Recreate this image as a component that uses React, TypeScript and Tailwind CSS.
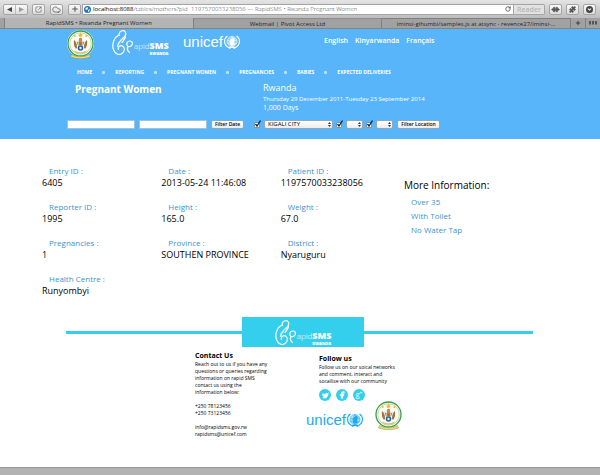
import type { ReactNode } from "react";
import {
  ChevronDown,
  Cloud,
  Facebook,
  Plus,
  Puzzle,
  RotateCw,
  SquareArrowOutUpRight,
  Twitter,
} from "lucide-react";

const navItems = [
  "Home",
  "Reporting",
  "Pregnant Women",
  "Pregnancies",
  "Babies",
  "Expected Deliveries",
];

const fields = [
  ["Entry ID", "6405"],
  ["Date", "2013-05-24 11:46:08"],
  ["Patient ID", "1197570033238056"],
  ["Reporter ID", "1995"],
  ["Height", "165.0"],
  ["Weight", "67.0"],
  ["Pregnancies", "1"],
  ["Province", "SOUTHEN PROVINCE"],
  ["District", "Nyaruguru"],
  ["Health Centre", "Runyombyi"],
];

function ToolButton({ label, children }: { label: string; children: ReactNode }) {
  return (
    <button
      aria-label={label}
      className="flex h-[11px] w-[13px] shrink-0 items-center justify-center rounded-[2px] border border-[#a5a5a5] bg-linear-to-b from-[#fafafa] to-[#dcdcdc] text-[#555]"
    >
      {children}
    </button>
  );
}

function Emblem() {
  return (
    <svg viewBox="0 0 54 60" className="h-[30px] w-[27px] shrink-0" aria-label="Republic of Rwanda">
      <circle cx="27" cy="29" r="27" fill="#fff" />
      <circle cx="27" cy="29" r="25" fill="#fffef6" stroke="#3d9a4c" strokeWidth="2.6" />
      <circle cx="27" cy="29" r="21.5" fill="none" stroke="#7fae5c" strokeWidth="1" />
      <g fill="#f1b932">
        <path d="M27 7l1.3 3 3-.8-1.7 2.7 2.4 2-3.2.4-.3 3.2-2-2.5-2.9 1.5.8-3.2-3-1.3 3.2-1z" />
        <circle cx="15.5" cy="14" r="2" />
        <circle cx="38.5" cy="14" r="2" />
      </g>
      <path d="M24 19q3-3 6 0l1 9h-8z" fill="#b98f5c" />
      <path d="M14 22q6 4 6 15l-2 3q-6-8-4-18z" fill="#a5713f" />
      <path d="M40 22q-6 4-6 15l2 3q6-8 4-18z" fill="#a5713f" />
      <path d="M20 25l3 8M34 25l-3 8" stroke="#3d9a4c" strokeWidth="1.8" />
      <path d="M23 27h8l-2 6h-4z" fill="#d0553f" />
      <circle cx="27" cy="38" r="5.6" fill="#2462a8" />
      <circle cx="27" cy="38" r="2.4" fill="#eef3f8" />
      <path d="M14 43q13 7 26 0l-2 4q-11 5-22 0z" fill="#d9c37a" />
      <path d="M9 51q18 9 36 0l2 5q-20 7-40 0z" fill="#f2d978" stroke="#6d9a45" strokeWidth="1" />
    </svg>
  );
}

function RapidSmsLogo() {
  return (
    <div className="flex items-start text-white" aria-label="RapidSMS Rwanda">
      <svg
        viewBox="0 0 44 54"
        className="h-[27px] w-[22px] shrink-0"
        fill="none"
        stroke="currentColor"
        strokeWidth="2.4"
        strokeLinecap="round"
        aria-hidden="true"
      >
        <path d="M15 13C12 4 24 0 27 7c3 7-4 10-8 14-4 4-7 8-8 14" />
        <path d="M14 12C5 16-1 29 3 41c3 10 12 12 17 8 6-4 6-11 2-14-5-4-11 1-9 6" />
        <path d="M20 27c4-6 8-9 7-15" />
        <path d="M32 35c-5-5-2-11 4-11s7 9 0 11l-5 1M31 37c-1 4 1 8 4 10" />
      </svg>
      <span className="mt-[11px] text-[8px] leading-[12px] font-light">apid</span>
      <span className="mt-[11px] flex flex-col">
        <strong className="text-[9px] leading-[12px] font-extrabold">SMS</strong>
        <strong className="-mt-px text-[4px] leading-[5px] font-extrabold">RWANDA</strong>
      </span>
    </div>
  );
}

function UnicefLogo() {
  return (
    <div className="flex items-center gap-px" aria-label="unicef">
      <span className="font-['Liberation_Sans',sans-serif] text-[15px] leading-[18px]">unicef</span>
      <svg
        viewBox="0 0 32 28"
        className="h-[14px] w-4"
        fill="none"
        stroke="currentColor"
        strokeWidth="1.2"
        aria-hidden="true"
      >
        <circle cx="16" cy="13" r="10" fill="currentColor" fillOpacity="0.35" />
        <path d="M7 11q9 4 18 0M7 17q9-4 18 0M16 3.5q-7 9 0 19q7-10 0-19" />
        <path d="M17 7c5-2 6 4 2 6l2 7h-9l2-5c-4-2-1-7 5-8z" fill="currentColor" />
        <path
          d="M7 2C-1 7-1 20 9 25M25 2c8 5 8 18-2 23M9 25q7-2 13 2M23 25q-7-2-13 2"
          strokeWidth="2.4"
        />
      </svg>
    </div>
  );
}

function TinySelect({ label, value, width }: { label: string; value: string; width: string }) {
  return (
    <div className={`relative ${width}`}>
      <select
        aria-label={label}
        defaultValue={value}
        className="block h-[9px] w-full appearance-none rounded-[2px] border border-[#8fa9bc] bg-linear-to-b from-white to-[#ececec] pl-[3px] text-[6px] leading-[7px] text-black"
      >
        <option>{value}</option>
      </select>
      <svg
        viewBox="0 0 6 10"
        className="pointer-events-none absolute top-[2px] right-[2px] h-[5px] w-[3px]"
        aria-hidden="true"
      >
        <path d="M3 0l3 4H0zM3 10l3-4H0z" fill="#333" />
      </svg>
    </div>
  );
}

function TinyCheck({ label }: { label: string }) {
  return (
    <span className="relative h-[9px] w-[7px] shrink-0">
      <input
        type="checkbox"
        defaultChecked
        aria-label={label}
        className="mt-[2px] block h-[6px] w-[6px] appearance-none rounded-[1px] border border-[#7a93a8] bg-white"
      />
      <svg
        viewBox="0 0 14 14"
        className="pointer-events-none absolute top-0 left-0 h-[7px] w-[7px]"
        aria-hidden="true"
      >
        <path d="M3 8l3 4 7-11" fill="none" stroke="#16263a" strokeWidth="2.6" />
      </svg>
    </span>
  );
}

const filterButton =
  "h-[9px] shrink-0 rounded-[2px] border border-[#8fa9bc] bg-linear-to-b from-white to-[#ececec] text-center text-[5px] leading-[7px] font-semibold whitespace-nowrap text-black";

function BrowserChrome() {
  return (
    <div className="font-['Open_Sans',sans-serif]">
      <div className="flex h-[18px] items-center bg-linear-to-b from-[#e4e4e4] to-[#bdbdbd] pr-1 pl-[3px]">
        <div className="mr-1 flex h-[11px] w-[25px] shrink-0 rounded-[2px] border border-[#a5a5a5] bg-linear-to-b from-[#fafafa] to-[#dcdcdc]">
          <button aria-label="Back" className="flex flex-1 items-center justify-center border-r border-[#bbb]">
            <svg viewBox="0 0 6 6" className="h-[5px] w-[5px]"><path d="M6 0v6L0 3z" fill="#444" /></svg>
          </button>
          <button aria-label="Forward" className="flex flex-1 items-center justify-center">
            <svg viewBox="0 0 6 6" className="h-[5px] w-[5px]"><path d="M0 0v6l6-3z" fill="#999" /></svg>
          </button>
        </div>
        <div className="mr-px flex gap-[5px]">
          <ToolButton label="Share"><SquareArrowOutUpRight size={7} /></ToolButton>
          <ToolButton label="iCloud tabs"><Cloud size={9} /></ToolButton>
          <ToolButton label="Add bookmark"><Plus size={8} strokeWidth={3} /></ToolButton>
        </div>
        <div className="flex h-[11px] min-w-0 flex-1 items-center border border-[#a5a5a5] bg-white pl-px text-[6px] leading-[9px] whitespace-nowrap text-[#444]">
          <svg viewBox="0 0 14 14" className="mr-[2px] h-[7px] w-[7px] shrink-0" aria-hidden="true">
            <circle cx="7" cy="7" r="7" fill="#2874c4" />
            <path d="M3 4l4-2 1 3-2 3-3-1zM8 8l4-2-2 5-2 1z" fill="#e6f2fb" />
          </svg>
          <span className="text-black">localhost:8088</span>
          <span className="truncate font-light">/tables/mothers?pid=1197570033238056 — RapidSMS • Rwanda Pregnant Women</span>
          <button aria-label="Reload" className="mr-[2px] ml-auto text-[#444]"><RotateCw size={6} strokeWidth={3} /></button>
        </div>
        <button className="mr-1 h-[11px] w-[31px] shrink-0 rounded-r-[2px] border border-l-0 border-[#a5a5a5] bg-[#e2e2e2] text-[7px] leading-[9px] font-semibold text-[#b5b5b5]">
          Reader
        </button>
        <div className="flex gap-1">
          <ToolButton label="Extension"><Puzzle size={7} fill="currentColor" className="rotate-45" /></ToolButton>
          <ToolButton label="Plugin"><Puzzle size={7} fill="currentColor" /></ToolButton>
          <ToolButton label="Downloads">
            <span className="flex h-[7px] w-[7px] items-center justify-center rounded-full bg-[#444] text-white">
              <ChevronDown size={5} strokeWidth={5} />
            </span>
          </ToolButton>
        </div>
      </div>
      <div className="flex h-[11px] border-b border-[#848484] bg-[#a1a1a1] pl-1 text-[6px] leading-[10px] font-medium text-[#252525]">
        <button className="min-w-0 flex-1 truncate border-x border-[#808080] bg-[#b4b4b4]">RapidSMS • Rwanda Pregnant Women</button>
        <button className="min-w-0 flex-1 truncate border-t border-[#8d8d8d]">Webmail | Pivot Access Ltd</button>
        <button className="min-w-0 flex-1 truncate border-t border-l border-[#808080]">
          iminsi-gihumbi/samples.js at atsync - revence27/iminsi-…
        </button>
        <button aria-label="New tab" className="flex w-[15px] items-center justify-center border-l border-[#808080]"><Plus size={6} strokeWidth={3} /></button>
        <button aria-label="Show all tabs" className="flex w-[15px] items-center justify-center border-l border-[#808080]">
          <svg viewBox="0 0 16 8" className="h-1 w-2"><path d="M0 0h4v7H0zM6 0h4v7H6zM12 0h4v7h-4z" fill="#555" /></svg>
        </button>
      </div>
    </div>
  );
}

export default function App() {
  return (
    <div className="flex min-h-screen flex-col bg-white font-['Open_Sans',sans-serif] text-black">
      <BrowserChrome />

      <header className="bg-[#58b5f9] pb-[10px] pl-[67px] text-white">
        <div className="flex h-8 items-start">
          <Emblem />
          <div className="ml-[18px] w-[71px]"><RapidSmsLogo /></div>
          <div className="mt-1 w-[141px]"><UnicefLogo /></div>
          <div className="mt-[6px] flex gap-[7px] text-[7px] leading-[12px] font-semibold">
            <a href="#en">English</a>
            <a href="#rw">Kinyarwanda</a>
            <a href="#fr">Français</a>
          </div>
        </div>
        <nav className="mt-[7px] flex items-center pl-[10px] text-[5px] leading-[8px] font-bold uppercase">
          {navItems.map((item, i) => (
            <span key={item} className="flex items-center whitespace-nowrap">
              {i > 0 && <span className="mx-[10px] h-[3px] w-[3px] rounded-[1px] bg-[#b9e0fd]" />}
              <a href="#nav">{item}</a>
            </span>
          ))}
        </nav>
        <div className="mt-[5px] flex pl-2">
          <h1 className="w-[188px] text-[10px] leading-[16px] font-bold">Pregnant Women</h1>
          <div>
            <p className="text-[9px] leading-[14px]">Rwanda</p>
            <p className="text-[6px] leading-[8px]">Thursday 29 December 2011-Tuesday 23 September 2014</p>
            <p className="text-[7px] leading-[10px]">1,000 Days</p>
          </div>
        </div>
        <form className="mt-[7px] flex items-center" onSubmit={(e) => e.preventDefault()}>
          <input aria-label="Start date" className="mr-1 h-[9px] w-[68px] border border-[#9cc4e0] bg-white text-[6px] text-black" />
          <input aria-label="End date" className="mr-1 h-[9px] w-[68px] border border-[#9cc4e0] bg-white text-[6px] text-black" />
          <button className={`${filterButton} w-[33px]`}>Filter Date</button>
          <div className="ml-[10px] flex items-center gap-[3px]">
            <TinyCheck label="Filter by province" />
            <TinySelect label="Province" value="KIGALI CITY" width="w-[69px]" />
            <TinyCheck label="Filter by district" />
            <TinySelect label="District" value="" width="w-[17px]" />
            <TinyCheck label="Filter by health centre" />
            <TinySelect label="Health centre" value="" width="w-[17px]" />
            <button className={`${filterButton} ml-[1px] w-[43px]`}>Filter Location</button>
          </div>
        </form>
      </header>

      <main className="flex flex-1 flex-col">
        <div className="flex pt-[26px] pl-[42px]">
          <dl className="grid w-[358px] grid-cols-3 gap-y-3">
            {fields.map(([label, value]) => (
              <div key={label}>
                <dt className="pl-[7px] text-[8px] leading-[12px] text-[#3c93cb]">{label} :</dt>
                <dd className="text-[9px] leading-[12px] whitespace-nowrap">{value}</dd>
              </div>
            ))}
          </dl>
          <section className="pt-[13px] pl-1">
            <h2 className="text-[10px] leading-[14px]">More Information:</h2>
            <ul className="mt-[3px] pl-[7px] text-[8px] leading-[14px] text-[#3c93cb]">
              <li>Over 35</li>
              <li>With Toilet</li>
              <li>No Water Tap</li>
            </ul>
          </section>
        </div>

        <footer className="pt-5 pl-[66px]">
          <div className="mr-[67px] flex items-center">
            <div className="h-[3px] w-44 bg-[#35cfee]" />
            <div className="flex h-[30px] w-[122px] items-start justify-center bg-[#35cfee] pt-[2px]">
              <RapidSmsLogo />
            </div>
            <div className="h-[3px] flex-1 bg-[#35cfee]" />
          </div>
          <div className="flex pt-1 pl-[129px] text-[5px] leading-[7px]">
            <section className="w-[124px]">
              <h3 className="text-[7px] leading-[10px] font-bold">Contact Us</h3>
              <p>
                Reach out to us if you have any<br />
                questions or queries regarding<br />
                information on rapid SMS<br />
                contact us using the<br />
                information below:
              </p>
              <p className="mt-[7px]">+250 78123456<br />+250 73123456</p>
              <p className="mt-[7px]">info@rapidsms.gov.rw<br />rapidsms@unicef.com</p>
            </section>
            <section className="pt-[3px]">
              <h3 className="text-[7px] leading-[10px] font-bold">Follow us</h3>
              <p>
                Follow us on our soical networks<br />
                and comment, interact and<br />
                socailise with our community
              </p>
              <div className="mt-1 flex gap-[5px] text-white">
                <a href="#twitter" aria-label="Twitter" className="flex h-3 w-3 items-center justify-center rounded-full bg-[#35cfee]">
                  <Twitter size={7} fill="currentColor" />
                </a>
                <a href="#facebook" aria-label="Facebook" className="flex h-3 w-3 items-center justify-center rounded-full bg-[#35cfee]">
                  <Facebook size={8} fill="currentColor" />
                </a>
                <a href="#google" aria-label="Google+" className="flex h-3 w-3 items-center justify-center rounded-full bg-[#35cfee] text-[7px] leading-[8px]">
                  g<sup className="text-[5px] leading-[4px]">+</sup>
                </a>
              </div>
              <div className="-mt-px -ml-[13px] flex items-center text-[#1caaf0]">
                <div className="mt-[9px] w-[69px]"><UnicefLogo /></div>
                <Emblem />
              </div>
            </section>
          </div>
        </footer>
      </main>

      <div className="h-2 border-t border-[#999] bg-[#b2b2b2]" />
    </div>
  );
}
